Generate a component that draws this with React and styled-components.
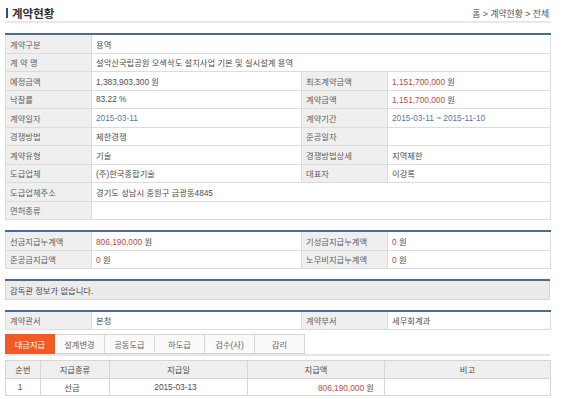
import React from 'react'
import styled, { createGlobalStyle } from 'styled-components';

const GlobalStyle = createGlobalStyle`
  body{
    margin:0;
    background:#fff;
    font-family:"Liberation Sans", "Noto Sans CJK KR", sans-serif;
    font-size:8.3px;
    color:#4d4d4d;
  }
`;

const infoCols = [86, 210, 86, 163];
const payCols = [35, 69, 138, 137, 166];
const tabs = ["대금지급", "설계변경", "공동도급", "하도급", "검수(사)", "감리"];

function Cols({ widths }) {
  return (
    <colgroup>
      {widths.map((w, i) => <col key={i} style={{ width: w }} />)}
    </colgroup>
  )
}

function App() {
  return (
    <Page>
      <GlobalStyle />
      <Header>
        <Title>계약현황</Title>
        <Crumb>홈 &gt; 계약현황 &gt; 전체</Crumb>
      </Header>

      <InfoTable>
        <Cols widths={infoCols} />
        <tbody>
          <tr><Label>계약구분</Label><Value colSpan={3}>용역</Value></tr>
          <tr><Label>계 약 명</Label><Value colSpan={3}>설악산국립공원 오색삭도 설치사업 기본 및 실시설계 용역</Value></tr>
          <tr>
            <Label>예정금액</Label><Value>1,383,903,300 원</Value>
            <Label>최초계약금액</Label><Value><Num $tone="red">1,151,700,000</Num> 원</Value>
          </tr>
          <tr>
            <Label>낙찰률</Label><Value>83.22 %</Value>
            <Label>계약금액</Label><Value><Num $tone="red">1,151,700,000</Num> 원</Value>
          </tr>
          <tr>
            <Label>계약일자</Label><Value><Num $tone="blue">2015-03-11</Num></Value>
            <Label>계약기간</Label><Value><Num $tone="blue">2015-03-11 ~ 2015-11-10</Num></Value>
          </tr>
          <tr>
            <Label>경쟁방법</Label><Value>제한경쟁</Value>
            <Label>준공일자</Label><Value></Value>
          </tr>
          <tr>
            <Label>계약유형</Label><Value>기술</Value>
            <Label>경쟁방법상세</Label><Value>지역제한</Value>
          </tr>
          <tr>
            <Label>도급업체</Label><Value>(주)한국종합기술</Value>
            <Label>대표자</Label><Value>이강록</Value>
          </tr>
          <tr><Label>도급업체주소</Label><Value colSpan={3}>경기도 성남시 중원구 금광동4845</Value></tr>
          <tr><Label>면허종류</Label><Value colSpan={3}></Value></tr>
        </tbody>
      </InfoTable>

      <InfoTable>
        <Cols widths={infoCols} />
        <tbody>
          <tr>
            <Label>선금지급누계액</Label><Value><Num $tone="red">806,190,000</Num> 원</Value>
            <Label>기성금지급누계액</Label><Value><Num $tone="red">0</Num> 원</Value>
          </tr>
          <tr>
            <Label>준공금지급액</Label><Value><Num $tone="red">0</Num> 원</Value>
            <Label>노무비지급누계액</Label><Value><Num $tone="red">0</Num> 원</Value>
          </tr>
        </tbody>
      </InfoTable>

      <InfoTable>
        <tbody>
          <tr><Notice>감독관 정보가 없습니다.</Notice></tr>
        </tbody>
      </InfoTable>

      <InfoTable>
        <Cols widths={infoCols} />
        <tbody>
          <tr>
            <Label>계약관서</Label><Value>본청</Value>
            <Label>계약부서</Label><Value>세무회계과</Value>
          </tr>
        </tbody>
      </InfoTable>

      <TabBar>
        {tabs.map((t, i) => <Tab key={i} $active={i === 0}>{t}</Tab>)}
      </TabBar>

      <PayTable>
        <Cols widths={payCols} />
        <thead>
          <tr>
            <PayHead>순번</PayHead>
            <PayHead>지급종류</PayHead>
            <PayHead>지급일</PayHead>
            <PayHead>지급액</PayHead>
            <PayHead>비고</PayHead>
          </tr>
        </thead>
        <tbody>
          <tr>
            <PayCell>1</PayCell>
            <PayCell>선금</PayCell>
            <PayCell>2015-03-13</PayCell>
            <PayCell $align="right"><Num $tone="red">806,190,000</Num> 원</PayCell>
            <PayCell></PayCell>
          </tr>
        </tbody>
      </PayTable>
    </Page>
  )
}

export default App

const Page = styled.div`
  width:545px;
  padding:0 12px 0 5px;
`;

const Header = styled.div`
  display:flex;
  align-items:center;
  justify-content:space-between;
  height:17px;
  padding:4px 1px 0 1px;
  border-bottom:2px solid #e8e8e8;
`;

const Title = styled.h2`
  margin:0;
  display:flex;
  align-items:center;
  font-size:11.5px;
  font-weight:bold;
  color:#333;
  &::before{
    content:"";
    width:2px;
    height:10px;
    background:#2c4d7e;
    margin-right:4px;
  }
`;

const Crumb = styled.span`
  font-size:8.8px;
  color:#555;
  padding-top:1px;
`;

const InfoTable = styled.table`
  width:545px;
  margin-top:10px;
  table-layout:fixed;
  border-collapse:collapse;
  border-top:2px solid #4d6a97;
  border-left:1px solid #d8d8d8;
  border-right:1px solid #d8d8d8;
  border-bottom:1px solid #d8d8d8;
`;

const Label = styled.th`
  height:17.5px;
  padding:0 4px;
  text-align:left;
  font-weight:normal;
  color:#5e5e5e;
  background:#efefef;
  border:1px solid #dcdcdc;
  white-space:nowrap;
`;

const Value = styled.td`
  height:17.5px;
  padding:0 4px;
  color:#4d4d4d;
  background:#fff;
  border:1px solid #dcdcdc;
  white-space:nowrap;
`;

const Num = styled.span`
  color:${p => p.$tone === 'red' ? '#c4473b' : p.$tone === 'blue' ? '#5477ac' : 'inherit'};
`;

const Notice = styled.td`
  height:17.5px;
  padding:0 4px;
  color:#4d4d4d;
  background:#ebebeb;
`;

const TabBar = styled.div`
  display:flex;
  margin-top:4px;
  border-bottom:2px solid #e6e6e6;
`;

const Tab = styled.div`
  width:50px;
  height:20px;
  display:flex;
  align-items:center;
  justify-content:center;
  box-sizing:border-box;
  border:1px solid ${p => p.$active ? '#f15a24' : '#d6d6d6'};
  border-left:${p => p.$active ? '1px solid #f15a24' : 'none'};
  background:${p => p.$active ? '#f15a24' : '#fafafa'};
  color:${p => p.$active ? '#fff' : '#666'};
`;

const PayTable = styled.table`
  width:545px;
  margin-top:4px;
  table-layout:fixed;
  border-collapse:collapse;
  border:1px solid #d6d6d6;
`;

const PayHead = styled.th`
  height:16.5px;
  padding:0 4px;
  font-weight:normal;
  color:#4d4d4d;
  background:#efefef;
  border:1px solid #d6d6d6;
`;

const PayCell = styled.td`
  height:16.5px;
  padding:0 10px 0 4px;
  text-align:${p => p.$align || 'center'};
  color:#4d4d4d;
  border:1px solid #d6d6d6;
`;
